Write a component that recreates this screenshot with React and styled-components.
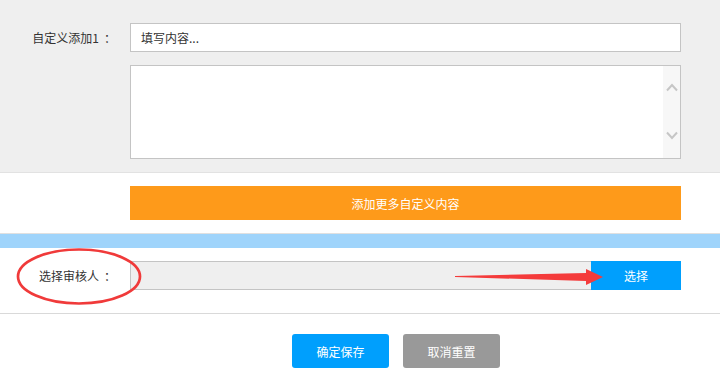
import React from 'react';
import styled, { createGlobalStyle } from 'styled-components';

const GlobalStyle = createGlobalStyle`
  html, body {
    margin: 0;
    padding: 0;
    background: #ffffff;
  }
  body {
    font-family: "Noto Sans CJK SC", "Noto Sans", sans-serif;
    font-size: 12px;
    color: #333333;
  }
`;

const Page = styled.div`
  position: relative;
  width: 720px;
  height: 380px;
  overflow: hidden;
  background: #ffffff;
`;

const GraySection = styled.section`
  background: #efefef;
  height: 149px;
  padding-top: 23px;
  border-bottom: 1px solid #e2e2e2;
  box-sizing: content-box;
`;

const Row = styled.div`
  display: flex;
  align-items: ${({ $top }) => ($top ? 'flex-start' : 'center')};
  margin-top: ${({ $gap }) => $gap || 0}px;
`;

const Label = styled.div`
  width: 130px;
  box-sizing: border-box;
  padding-right: 14px;
  text-align: right;
  white-space: nowrap;
  font-size: 12px;
  line-height: 16px;
  color: #333333;
`;

const Colon = styled.span`
  margin-left: 5px;
`;

const TextInput = styled.div`
  width: 551px;
  height: 29px;
  box-sizing: border-box;
  border: 1px solid #c4c4c4;
  background: #ffffff;
  padding-left: 10px;
  display: flex;
  align-items: center;
  font-size: 12px;
  color: #333333;
`;

const TextArea = styled.div`
  width: 551px;
  height: 94px;
  box-sizing: border-box;
  border: 1px solid #c4c4c4;
  background: #ffffff;
  display: flex;
  justify-content: flex-end;
`;

const ScrollTrack = styled.div`
  width: 17px;
  height: 100%;
  background: #f7f7f7;
  display: flex;
  flex-direction: column;
  align-items: center;
  justify-content: space-between;
  padding: 17px 0 18px;
  box-sizing: border-box;
`;

const WhiteBlock = styled.section`
  padding: 13px 0 13px 130px;
`;

const OrangeButton = styled.div`
  width: 551px;
  height: 34px;
  background: #fe9a1a;
  color: #ffffff;
  font-size: 12px;
  display: flex;
  align-items: center;
  justify-content: center;
`;

const BlueBand = styled.div`
  height: 14px;
  border-top: 1px solid #e0e0e0;
  background: #9fd4fb;
`;

const ReviewerSection = styled.section`
  padding: 13px 0 23px;
  border-bottom: 1px solid #d9d9d9;
`;

const PickerField = styled.div`
  width: 461px;
  height: 29px;
  box-sizing: border-box;
  border: 1px solid #c4c4c4;
  border-right: none;
  background: #efefef;
`;

const PickButton = styled.div`
  width: 90px;
  height: 29px;
  background: #009ffd;
  color: #ffffff;
  font-size: 12px;
  display: flex;
  align-items: center;
  justify-content: center;
`;

const Actions = styled.div`
  display: flex;
  gap: 14px;
  padding: 20px 0 0 292px;
`;

const ActionButton = styled.div`
  width: 97px;
  height: 34px;
  border-radius: 3px;
  background: ${({ $variant }) => ($variant === 'gray' ? '#999999' : '#009ffd')};
  color: #ffffff;
  font-size: 12px;
  display: flex;
  align-items: center;
  justify-content: center;
`;

const Annotations = styled.svg`
  position: absolute;
  left: 0;
  top: 0;
  pointer-events: none;
`;

const Chevron = ({ up }) => (
  <svg width="12" height="9" viewBox="0 0 12 9">
    <path
      d={up ? 'M1 7.5 L6 2 L11 7.5' : 'M1 1.5 L6 7 L11 1.5'}
      fill="none"
      stroke="#c6c6c6"
      strokeWidth="2"
    />
  </svg>
);

export default function App() {
  return (
    <Page>
      <GlobalStyle />
      <GraySection>
        <Row>
          <Label>
            自定义添加1<Colon>：</Colon>
          </Label>
          <TextInput>填写内容...</TextInput>
        </Row>
        <Row $top $gap={13}>
          <Label />
          <TextArea>
            <ScrollTrack>
              <Chevron up />
              <Chevron />
            </ScrollTrack>
          </TextArea>
        </Row>
      </GraySection>

      <WhiteBlock>
        <OrangeButton>添加更多自定义内容</OrangeButton>
      </WhiteBlock>

      <BlueBand />

      <ReviewerSection>
        <Row>
          <Label>
            选择审核人<Colon>：</Colon>
          </Label>
          <PickerField />
          <PickButton>选择</PickButton>
        </Row>
      </ReviewerSection>

      <Actions>
        <ActionButton>确定保存</ActionButton>
        <ActionButton $variant="gray">取消重置</ActionButton>
      </Actions>

      <Annotations width="720" height="380" viewBox="0 0 720 380">
        <ellipse cx="79" cy="276.5" rx="61" ry="27" fill="none" stroke="#f03a3a" strokeWidth="2.7" />
        <polygon
          points="455,276 586,273 586,269 603,277 586,285 586,281 455,277"
          fill="#f43b3b"
        />
      </Annotations>
    </Page>
  );
}
